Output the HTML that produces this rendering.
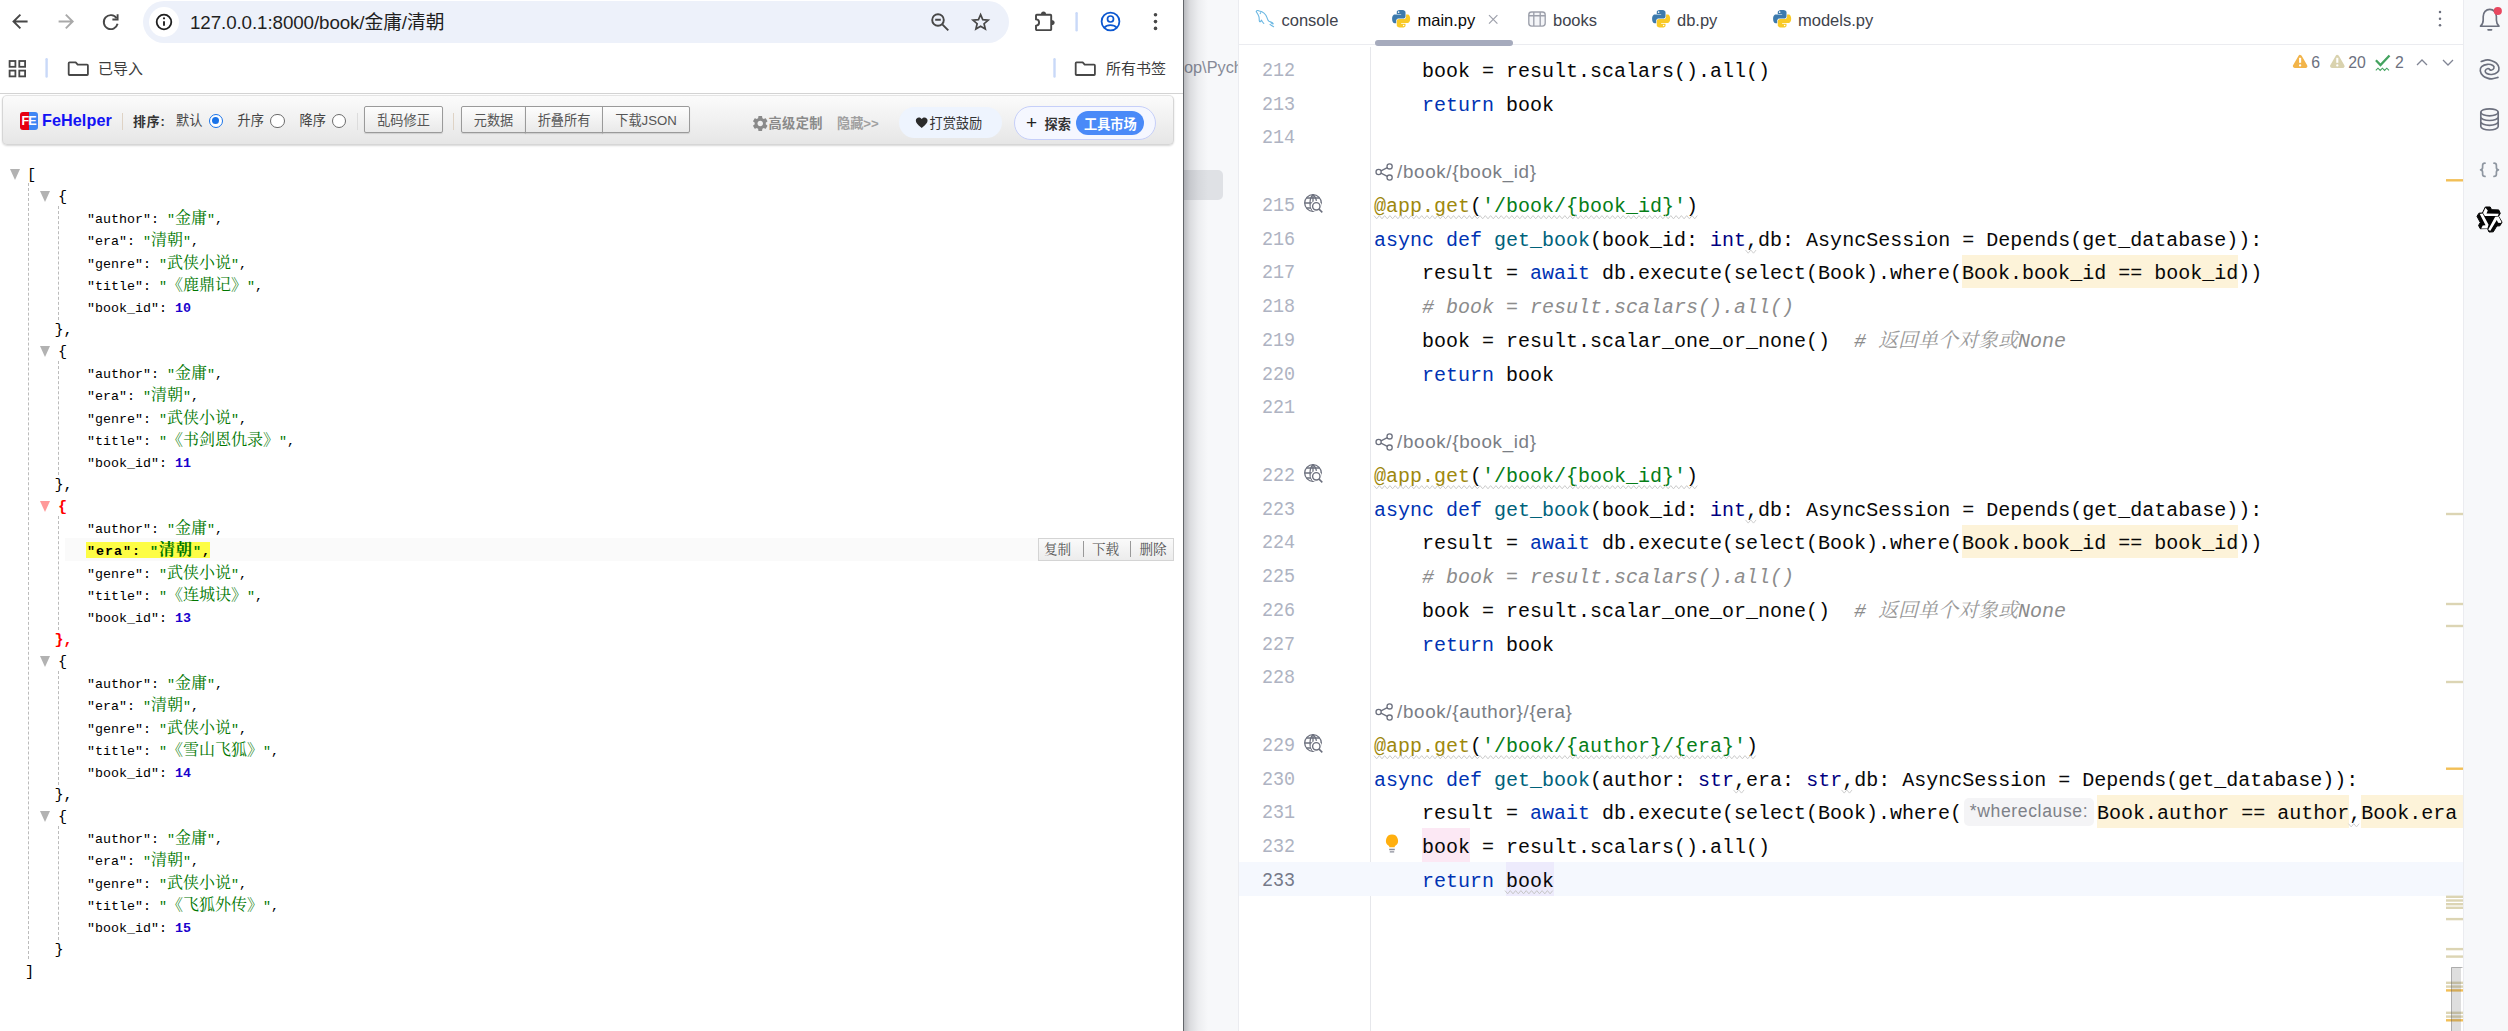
<!DOCTYPE html>
<html lang="zh-CN"><head><meta charset="utf-8"><title>FeHelper JSON / PyCharm</title>
<style>
*{box-sizing:border-box}
html,body{margin:0;padding:0}
body{width:2508px;height:1031px;overflow:hidden;background:#fff;position:relative;font-family:"Liberation Sans","Noto Sans CJK SC",sans-serif;color:#1f1f1f}
.abs{position:absolute}
#br{position:absolute;left:0;top:0;width:1183px;height:1031px;background:#fff;overflow:hidden}
#ide{position:absolute;left:1183px;top:0;width:1325px;height:1031px;background:#fff;overflow:hidden}
.ui{font-family:"Liberation Sans","Noto Sans CJK SC",sans-serif}
/* ---- browser chrome ---- */
#omni{position:absolute;left:143px;top:1px;width:866px;height:42px;border-radius:21px;background:#edf1fa}
#info{position:absolute;left:149px;top:7px;width:30px;height:30px;border-radius:15px;background:#fff}
#url{position:absolute;left:190px;top:9.5px;font-size:18.8px;line-height:26px;color:#1f1f1f;white-space:nowrap;letter-spacing:-0.1px}
.bm{position:absolute;margin-top:.8px;font-size:15px;line-height:20px;color:#3c3c3c;white-space:nowrap}
/* ---- fehelper ---- */
#fhbar{position:absolute;left:1.8px;top:94.5px;width:1172.2px;height:50px;border:1px solid #d6d6d6;border-top-color:#e4e4e4;border-radius:5px;background:linear-gradient(#fbfbfb,#e6e6e6);box-shadow:0 1px 2px rgba(0,0,0,.16)}
.ft{position:absolute;margin-top:1.3px;font-size:13.2px;line-height:20px;white-space:nowrap;color:#444}
.fbtn{position:absolute;top:106px;height:27px;border:1px solid #9a9a9a;background:linear-gradient(#fdfdfd,#e9e9e9);font-size:13.2px;line-height:28.8px;text-align:center;color:#555;box-shadow:0 1px 1px rgba(0,0,0,.12)}
.radio{position:absolute;width:14.6px;height:14.6px;border-radius:7.3px;border:1.3px solid #6b6b6b;background:#fff}
/* ---- json ---- */
.jr{position:absolute;left:0;height:22px;line-height:22px;white-space:pre;font-family:"Liberation Mono","Noto Serif CJK SC",monospace;font-size:13.33px;color:#000}
.jr .c{font-family:"Liberation Mono","Noto Serif CJK SC",serif;font-size:16px;line-height:0}
.s{color:#007700}.n{color:#1a01cc;font-weight:bold}
.tri{position:absolute;width:0;height:0;border-left:5.5px solid transparent;border-right:5.5px solid transparent;border-top:11px solid #b2b2b2}
.vl{position:absolute;width:0;border-left:1px dashed #bbb}
/* ---- ide ---- */
.cl{position:absolute;left:191px;height:34px;line-height:34px;white-space:pre;font-family:"Liberation Mono","Noto Sans CJK SC",monospace;font-size:20px;color:#080808}
.ln{position:absolute;left:55px;width:57px;text-align:right;height:34px;line-height:34px;font-family:"Liberation Mono",monospace;font-size:18.4px;color:#aeb3c2;transform:scaleY(1.1);transform-origin:50% 58%}
.k{color:#0033b3}.f{color:#00627a}.d{color:#9e880d}.g{color:#067d17}.cm{color:#8c8c8c;font-style:italic}.b{color:#000080}
.hw{background:#fdf3d9}.cn{font-family:"Liberation Mono","Noto Serif CJK SC",serif;color:#999;line-height:0}
.hint{position:absolute;left:214px;height:34px;line-height:34px;font-size:18.8px;letter-spacing:.68px;color:#7a7e85;white-space:nowrap}
.tab{position:absolute;top:9px;font-size:16.5px;line-height:22px;color:#4a4d57;white-space:nowrap}
.mk{position:absolute;left:1263px;width:17px;height:2px}
</style></head><body>

<div id="br">
<!-- nav icons -->
<svg class="abs" style="left:0;top:0" width="1183" height="93" viewBox="0 0 1183 93" fill="none" stroke-linecap="round" stroke-linejoin="round">
 <g stroke="#474747" stroke-width="1.9">
  <path d="M27.6 21.5H14.2M20.4 14.6l-6.9 6.9 6.9 6.9" stroke-linecap="butt" stroke-linejoin="miter"/>
  <path d="M116.6 18.2a7 7 0 1 0 1 5.6" stroke-linecap="butt"/>
  <path d="M117.6 14.3v5.2h-5.2" stroke-linecap="butt" stroke-linejoin="miter"/>
 </g>
 <path d="M58.6 21.5H72M65.8 14.6l6.9 6.9-6.9 6.9" stroke="#a9a9a9" stroke-width="1.9" stroke-linecap="butt" stroke-linejoin="miter"/>
</svg>
<div id="omni"></div>
<div id="info"></div>
<svg class="abs" style="left:143px;top:0" width="870" height="44" viewBox="143 0 870 44" fill="none">
 <circle cx="164" cy="22" r="7.3" stroke="#1f1f1f" stroke-width="1.8"/>
 <path d="M164 21.2v4.6" stroke="#1f1f1f" stroke-width="1.9"/><circle cx="164" cy="18.3" r="1.1" fill="#1f1f1f"/>
 <g stroke="#474747" stroke-width="1.9">
  <circle cx="938" cy="20" r="5.8"/><path d="M942.3 24.4l6 6M935.2 19.8h5.6"/>
  <path d="M980.6 14.6l2.15 5.05 5.45.47-4.14 3.58 1.25 5.33-4.71-2.84-4.71 2.84 1.25-5.33-4.14-3.58 5.45-.47z" stroke-width="1.7" stroke-linejoin="miter"/>
 </g>
</svg>
<div id="url">127.0.0.1:8000/book/金庸/清朝</div>
<svg class="abs" style="left:1020px;top:0" width="163" height="44" viewBox="1020 0 163 44" fill="none">
 <path d="M1036 19.400V15.600a.8.800 0 0 1 .8-.8h13.600a.8.800 0 0 1 .8.800v13.700a.8.800 0 0 1-.8.800h-13.600a.8.800 0 0 1-.8-.8v-3.700A3.100 3.100 0 0 0 1036 19.400z" stroke="#474747" stroke-width="1.900" stroke-linejoin="round"/>
 <path d="M1040.900 14.800a2.600 3.400 0 0 1 5.200 0z" fill="#474747"/><path d="M1051.200 19.900a3.400 2.600 0 0 1 0 5.200z" fill="#474747"/>
 <rect x="1075.400" y="12" width="2.4" height="19.5" rx="1.2" fill="#c9d9f8"/>
 <circle cx="1110.500" cy="21.500" r="8.900" stroke="#0b57d0" stroke-width="1.8"/>
 <circle cx="1110.500" cy="19" r="3" stroke="#0b57d0" stroke-width="1.7"/>
 <path d="M1104.300 27.600c3-3.400 9.400-3.400 12.400 0" stroke="#0b57d0" stroke-width="1.7"/>
 <circle cx="1155.500" cy="14.800" r="1.800" fill="#474747"/><circle cx="1155.500" cy="21.600" r="1.800" fill="#474747"/><circle cx="1155.500" cy="28.400" r="1.800" fill="#474747"/>
</svg>
<!-- bookmarks bar -->
<svg class="abs" style="left:0;top:50px" width="1183" height="40" viewBox="0 50 1183 40" fill="none">
 <g stroke="#474747" stroke-width="1.8">
  <rect x="9.600" y="61" width="5.800" height="5.800"/><rect x="19.300" y="61" width="5.800" height="5.800"/>
  <rect x="9.600" y="70.600" width="5.800" height="5.800"/><rect x="19.300" y="70.600" width="5.800" height="5.800"/>
  <path d="M69.500 62.400h6.200l2 2.300h9.400a.8.800 0 0 1 .8.800v8.700a.8.800 0 0 1-.8.800H69.500a.8.800 0 0 1-.8-.8V63.200a.8.800 0 0 1 .8-.8z" stroke-linejoin="round"/>
  <path d="M1076.500 62.400h6.200l2 2.300h9.400a.8.800 0 0 1 .8.800v8.700a.8.800 0 0 1-.8.800h-17.600a.8.800 0 0 1-.8-.8V63.200a.8.800 0 0 1 .8-.8z" stroke-linejoin="round"/>
 </g>
 <rect x="45.400" y="58" width="2.400" height="19.800" rx="1.200" fill="#c9d9f8"/>
 <rect x="1053.300" y="58" width="2.400" height="19.800" rx="1.200" fill="#c9d9f8"/>
</svg>
<div class="bm" style="left:98px;top:58px">已导入</div>
<div class="bm" style="left:1106px;top:58px">所有书签</div>
<div class="abs" style="left:0;top:93px;width:1183px;height:1px;background:#d3d3d3"></div>

<div id="fhbar"></div>
<div class="abs" style="left:20px;top:112px;width:18px;height:18px;border-radius:3px;overflow:hidden;background:linear-gradient(90deg,#e60012 0,#e60012 50%,#3f86f4 50%,#3f86f4 100%)"><div class="abs" style="left:1.5px;top:2px;font:bold 12.5px/14px 'Liberation Sans',sans-serif;color:#fff;letter-spacing:-0.8px">FE</div></div>
<div class="ft" style="left:42px;top:108px;font-size:16.2px;line-height:22px;font-weight:bold;color:#1212f5;letter-spacing:.07px">FeHelper</div>
<div class="abs" style="left:121.500px;top:113px;width:1px;height:17px;background:#dfd3c5"></div>
<div class="ft" style="left:133px;top:110.600px;font-size:12.800px;font-weight:bold;color:#333;letter-spacing:.9px">排序:</div>
<div class="ft" style="left:176px;top:110px">默认</div>
<div class="radio" style="left:208.500px;top:113.500px;border-color:#1a73e8"><div class="abs" style="left:2.2px;top:2.2px;width:7px;height:7px;border-radius:4px;background:#1a73e8"></div></div>
<div class="ft" style="left:237.500px;top:110px">升序</div>
<div class="radio" style="left:270px;top:113.500px"></div>
<div class="ft" style="left:299.500px;top:110px">降序</div>
<div class="radio" style="left:331.500px;top:113.500px"></div>
<div class="abs" style="left:356.500px;top:113px;width:1px;height:17px;background:#dcdcdc"></div>
<div class="fbtn" style="left:364px;width:79px;border-radius:2px">乱码修正</div>
<div class="abs" style="left:453px;top:113px;width:1px;height:17px;background:#dfd3c5"></div>
<div class="fbtn" style="left:461px;width:65px;border-radius:2px 0 0 2px">元数据</div>
<div class="fbtn" style="left:525px;width:78px;border-radius:0">折叠所有</div>
<div class="fbtn" style="left:602px;width:88px;border-radius:0 2px 2px 0">下载JSON</div>
<svg class="abs" style="left:750.800px;top:113.500px" width="18.500" height="19" viewBox="0 0 24 24" preserveAspectRatio="none"><path fill="#8a8a8a" d="M19.140 12.940c.040-.3.060-.610.060-.940 0-.320-.020-.640-.070-.940l2.030-1.580a.490.490 0 0 0 .120-.610l-1.920-3.320a.488.488 0 0 0-.590-.220l-2.390.960c-.5-.380-1.030-.7-1.620-.940l-.360-2.540a.484.484 0 0 0-.480-.410h-3.840c-.240 0-.430.170-.470.410l-.360 2.540c-.590.240-1.130.570-1.620.940l-2.390-.960c-.220-.080-.470 0-.590.220L2.740 8.870c-.120.210-.080.470.120.610l2.030 1.580c-.050.3-.090.630-.090.940s.020.640.070.940l-2.030 1.580a.490.490 0 0 0-.120.610l1.920 3.320c.120.220.370.290.590.220l2.390-.960c.5.380 1.030.7 1.620.940l.360 2.540c.050.240.240.410.480.410h3.840c.240 0 .440-.170.470-.410l.360-2.540c.590-.240 1.130-.560 1.620-.940l2.390.960c.220.080.470 0 .590-.220l1.920-3.320c.120-.220.070-.470-.120-.610l-2.010-1.580zM12 15.600c-1.980 0-3.600-1.620-3.600-3.600s1.620-3.600 3.600-3.600 3.600 1.620 3.600 3.600-1.620 3.600-3.600 3.600z"/></svg>
<div class="ft" style="left:768.500px;top:113px;font-weight:bold;color:#8a8a8a;letter-spacing:.4px">高级定制</div>
<div class="ft" style="left:837px;top:113px;font-weight:bold;color:#a0a0a0">隐藏&gt;&gt;</div>
<div class="abs" style="left:899px;top:107px;width:103px;height:30.500px;border-radius:16px;background:#eef4fe"></div>
<svg class="abs" style="left:914.600px;top:116px" width="13.400" height="12.500" viewBox="0 0 24 22"><path fill="#2b2b2b" d="M12 21.400l-1.500-1.400C4.900 15 1.500 11.900 1.500 8.100 1.500 5 3.900 2.600 7 2.600c1.700 0 3.400.8 4.500 2.100l.5.600.5-.6c1.100-1.300 2.800-2.100 4.500-2.100 3.100 0 5.500 2.400 5.500 5.500 0 3.800-3.400 6.900-9 12z"/></svg>
<div class="ft" style="left:929.500px;top:112.500px;color:#333">打赏鼓励</div>
<div class="abs" style="left:1014px;top:106px;width:142px;height:34px;border-radius:17px;background:#f5f7ff;border:1px solid #c6cff9"></div>
<div class="ft" style="left:1026px;top:111px;font-size:19px;line-height:22px;color:#222">+</div>
<div class="ft" style="left:1044.500px;top:113.500px;font-weight:bold;color:#333">探索</div>
<div class="abs" style="left:1076px;top:111px;width:68px;height:24px;border-radius:12px;background:#4a8af8"></div>
<div class="ft" style="left:1084px;top:113.500px;font-weight:bold;color:#fff">工具市场</div>
<div class="abs" style="left:65px;top:538px;width:1109px;height:22.5px;background:#fafafa"></div>
<div class="abs" style="left:86px;top:542px;width:124px;height:16px;background:#fdfd45"></div>
<div class="vl" style="left:28px;top:183px;height:776px"></div>
<div class="jr" style="top:163.70px;padding-left:27px;font-size:15.200px;">[</div>
<div class="tri" style="left:9.900px;top:169px"></div>
<div class="tri" style="left:40.400px;top:190.74px;"></div>
<div class="vl" style="left:58px;top:206.14px;height:113.71px"></div>
<div class="jr" style="top:185.84px;padding-left:58px;font-size:15.200px;">{</div>
<div class="jr" style="top:209.29px;padding-left:87px;">"author": <span class="s">"<span class="c">金庸</span>"</span>,</div>
<div class="jr" style="top:231.43px;padding-left:87px;">"era": <span class="s">"<span class="c">清朝</span>"</span>,</div>
<div class="jr" style="top:253.57px;padding-left:87px;">"genre": <span class="s">"<span class="c">武侠小说</span>"</span>,</div>
<div class="jr" style="top:275.71px;padding-left:87px;">"title": <span class="s">"<span class="c">《鹿鼎记》</span>"</span>,</div>
<div class="jr" style="top:297.86px;padding-left:87px;">"book_id": <span class="n">10</span></div>
<div class="jr" style="top:318.70px;padding-left:54.5px;font-size:15.200px;">},</div>
<div class="tri" style="left:40.400px;top:345.74px;"></div>
<div class="vl" style="left:58px;top:361.14px;height:113.71px"></div>
<div class="jr" style="top:340.84px;padding-left:58px;font-size:15.200px;">{</div>
<div class="jr" style="top:364.29px;padding-left:87px;">"author": <span class="s">"<span class="c">金庸</span>"</span>,</div>
<div class="jr" style="top:386.43px;padding-left:87px;">"era": <span class="s">"<span class="c">清朝</span>"</span>,</div>
<div class="jr" style="top:408.57px;padding-left:87px;">"genre": <span class="s">"<span class="c">武侠小说</span>"</span>,</div>
<div class="jr" style="top:430.71px;padding-left:87px;">"title": <span class="s">"<span class="c">《书剑恩仇录》</span>"</span>,</div>
<div class="jr" style="top:452.86px;padding-left:87px;">"book_id": <span class="n">11</span></div>
<div class="jr" style="top:473.70px;padding-left:54.5px;font-size:15.200px;">},</div>
<div class="tri" style="left:40.400px;top:500.74px;border-top-color:#f99"></div>
<div class="vl" style="left:58px;top:516.14px;height:113.71px"></div>
<div class="jr" style="top:495.84px;padding-left:58px;color:#f00;font-weight:bold;font-size:15.200px;">{</div>
<div class="jr" style="top:519.29px;padding-left:87px;">"author": <span class="s">"<span class="c">金庸</span>"</span>,</div>
<div class="jr" style="top:541.43px;padding-left:87px;font-weight:bold;letter-spacing:1px;">"era": <span class="s">"<span class="c">清朝</span>"</span>,</div>
<div class="jr" style="top:563.57px;padding-left:87px;">"genre": <span class="s">"<span class="c">武侠小说</span>"</span>,</div>
<div class="jr" style="top:585.71px;padding-left:87px;">"title": <span class="s">"<span class="c">《连城诀》</span>"</span>,</div>
<div class="jr" style="top:607.86px;padding-left:87px;">"book_id": <span class="n">13</span></div>
<div class="jr" style="top:628.70px;padding-left:54.5px;color:#f00;font-weight:bold;font-size:15.200px;">},</div>
<div class="tri" style="left:40.400px;top:655.74px;"></div>
<div class="vl" style="left:58px;top:671.14px;height:113.71px"></div>
<div class="jr" style="top:650.84px;padding-left:58px;font-size:15.200px;">{</div>
<div class="jr" style="top:674.29px;padding-left:87px;">"author": <span class="s">"<span class="c">金庸</span>"</span>,</div>
<div class="jr" style="top:696.43px;padding-left:87px;">"era": <span class="s">"<span class="c">清朝</span>"</span>,</div>
<div class="jr" style="top:718.57px;padding-left:87px;">"genre": <span class="s">"<span class="c">武侠小说</span>"</span>,</div>
<div class="jr" style="top:740.71px;padding-left:87px;">"title": <span class="s">"<span class="c">《雪山飞狐》</span>"</span>,</div>
<div class="jr" style="top:762.86px;padding-left:87px;">"book_id": <span class="n">14</span></div>
<div class="jr" style="top:783.70px;padding-left:54.5px;font-size:15.200px;">},</div>
<div class="tri" style="left:40.400px;top:810.74px;"></div>
<div class="vl" style="left:58px;top:826.14px;height:113.71px"></div>
<div class="jr" style="top:805.84px;padding-left:58px;font-size:15.200px;">{</div>
<div class="jr" style="top:829.29px;padding-left:87px;">"author": <span class="s">"<span class="c">金庸</span>"</span>,</div>
<div class="jr" style="top:851.43px;padding-left:87px;">"era": <span class="s">"<span class="c">清朝</span>"</span>,</div>
<div class="jr" style="top:873.57px;padding-left:87px;">"genre": <span class="s">"<span class="c">武侠小说</span>"</span>,</div>
<div class="jr" style="top:895.71px;padding-left:87px;">"title": <span class="s">"<span class="c">《飞狐外传》</span>"</span>,</div>
<div class="jr" style="top:917.86px;padding-left:87px;">"book_id": <span class="n">15</span></div>
<div class="jr" style="top:938.70px;padding-left:54.5px;font-size:15.200px;">}</div>
<div class="jr" style="top:960.84px;padding-left:25px;font-size:15.200px;">]</div>
<div class="abs" style="left:1038px;top:538px;width:136px;height:22.500px;border:1px solid #d4d4d4;background:linear-gradient(#fafafa,#ececec)"></div>
<div class="abs" style="left:1044px;top:540px;font:13.600px/19px 'Liberation Serif','Noto Serif CJK SC',serif;color:#555;white-space:nowrap">复制</div>
<div class="abs" style="left:1092px;top:540px;font:13.600px/19px 'Liberation Serif','Noto Serif CJK SC',serif;color:#555;white-space:nowrap">下载</div>
<div class="abs" style="left:1139.5px;top:540px;font:13.600px/19px 'Liberation Serif','Noto Serif CJK SC',serif;color:#555;white-space:nowrap">删除</div>
<div class="abs" style="left:1083px;top:541px;width:1px;height:16px;background:#999"></div>
<div class="abs" style="left:1130px;top:541px;width:1px;height:16px;background:#999"></div>
</div><!-- /br -->
<div id="ide">
<div class="abs" style="left:1px;top:0;width:55px;height:1031px;background:#f7f8fa;border-right:1px solid #ebecf0"></div>
<div class="abs" style="left:1px;top:170px;width:39px;height:30px;border-radius:0 5px 5px 0;background:#dfe1e5"></div>
<div class="abs ui" style="left:1px;top:55px;width:54px;height:24px;overflow:hidden;font-size:16.300px;line-height:24px;color:#868a97;white-space:nowrap">op\Pychar</div>
<div class="abs" style="left:1px;top:0;width:24px;height:1031px;background:linear-gradient(90deg,rgba(70,72,80,.34),rgba(70,72,80,.16) 25%,rgba(70,72,80,.06) 60%,rgba(70,72,80,0))"></div>
<div class="abs" style="left:0;top:0;width:1px;height:1031px;background:#63666b"></div>
<div class="abs" style="left:56px;top:44px;width:1224px;height:1px;background:#ebecf0"></div>
<div class="abs" style="left:192px;top:40px;width:138px;height:6px;border-radius:3px;background:#a6abbd"></div>

<div class="tab" style="left:98.5px;color:#40434c">console</div>
<div class="tab" style="left:234.5px;color:#0a0a0a">main.py</div>
<div class="tab" style="left:370px;color:#40434c">books</div>
<div class="tab" style="left:494px;color:#40434c">db.py</div>
<div class="tab" style="left:615px;color:#40434c">models.py</div>
<div class="abs" style="left:187px;top:47px;width:1px;height:984px;background:#e6e7eb"></div>
<div class="abs" style="left:56px;top:862.00px;width:1224px;height:33.75px;background:#f5f8fe"></div>
<div class="abs" style="left:779.0px;top:254.50px;width:276.0px;height:33.75px;background:#fdf3d9"></div>
<div class="abs" style="left:779.0px;top:524.50px;width:276.0px;height:33.75px;background:#fdf3d9"></div>
<div class="abs" style="left:914.0px;top:794.50px;width:252.0px;height:33.75px;background:#fdf3d9"></div>
<div class="abs" style="left:1178.0px;top:794.50px;width:102.0px;height:33.75px;background:#fdf3d9"></div>
<div class="abs" style="left:239.0px;top:828.25px;width:48.0px;height:33.75px;background:#fce8f4"></div>
<div class="abs" style="left:323.0px;top:862.00px;width:48.0px;height:33.75px;background:#edebfc"></div>
<div class="abs ui" style="left:781.0px;top:798.00px;width:130px;height:27.500px;border-radius:5px;background:#f4f4f6;font-size:17.600px;letter-spacing:.62px;line-height:27px;color:#7e8188;text-align:center;white-space:nowrap">*whereclause:</div>
<div class="ln" style="top:54.80px">212</div>
<div class="cl" style="top:54.80px">    book = result.scalars().all()</div>
<div class="ln" style="top:88.55px">213</div>
<div class="cl" style="top:88.55px">    <span class="k">return</span> book</div>
<div class="ln" style="top:122.30px">214</div>
<div class="hint ui" style="top:154.75px">/book/{book_id}</div>
<div class="ln" style="top:189.80px">215</div>
<div class="cl" style="top:189.80px"><span class="d">@app.get</span>(<span class="g">'/book/{book_id}'</span>)</div>
<div class="ln" style="top:223.55px">216</div>
<div class="cl" style="top:223.55px"><span class="k">async def</span> <span class="f">get_book</span>(book_id: <span class="b">int</span>,db: AsyncSession = Depends(get_database)):</div>
<div class="ln" style="top:257.30px">217</div>
<div class="cl" style="top:257.30px">    result = <span class="k">await</span> db.execute(select(Book).where(Book.book_id == book_id))</div>
<div class="ln" style="top:291.05px">218</div>
<div class="cl" style="top:291.05px">    <span class="cm"># book = result.scalars().all()</span></div>
<div class="ln" style="top:324.80px">219</div>
<div class="cl" style="top:324.80px">    book = result.scalar_one_or_none()  <span class="cm"># <span class="cn">返回单个对象或</span>None</span></div>
<div class="ln" style="top:358.55px">220</div>
<div class="cl" style="top:358.55px">    <span class="k">return</span> book</div>
<div class="ln" style="top:392.30px">221</div>
<div class="hint ui" style="top:424.75px">/book/{book_id}</div>
<div class="ln" style="top:459.80px">222</div>
<div class="cl" style="top:459.80px"><span class="d">@app.get</span>(<span class="g">'/book/{book_id}'</span>)</div>
<div class="ln" style="top:493.55px">223</div>
<div class="cl" style="top:493.55px"><span class="k">async def</span> <span class="f">get_book</span>(book_id: <span class="b">int</span>,db: AsyncSession = Depends(get_database)):</div>
<div class="ln" style="top:527.30px">224</div>
<div class="cl" style="top:527.30px">    result = <span class="k">await</span> db.execute(select(Book).where(Book.book_id == book_id))</div>
<div class="ln" style="top:561.05px">225</div>
<div class="cl" style="top:561.05px">    <span class="cm"># book = result.scalars().all()</span></div>
<div class="ln" style="top:594.80px">226</div>
<div class="cl" style="top:594.80px">    book = result.scalar_one_or_none()  <span class="cm"># <span class="cn">返回单个对象或</span>None</span></div>
<div class="ln" style="top:628.55px">227</div>
<div class="cl" style="top:628.55px">    <span class="k">return</span> book</div>
<div class="ln" style="top:662.30px">228</div>
<div class="hint ui" style="top:694.75px">/book/{author}/{era}</div>
<div class="ln" style="top:729.80px">229</div>
<div class="cl" style="top:729.80px"><span class="d">@app.get</span>(<span class="g">'/book/{author}/{era}'</span>)</div>
<div class="ln" style="top:763.55px">230</div>
<div class="cl" style="top:763.55px"><span class="k">async def</span> <span class="f">get_book</span>(author: <span class="b">str</span>,era: <span class="b">str</span>,db: AsyncSession = Depends(get_database)):</div>
<div class="ln" style="top:797.30px">231</div>
<div class="cl" style="top:797.30px">    result = <span class="k">await</span> db.execute(select(Book).where(<span style="display:inline-block;width:135px"></span>Book.author == author,Book.era == era))</div>
<div class="ln" style="top:831.05px">232</div>
<div class="cl" style="top:831.05px">    book = result.scalars().all()</div>
<div class="ln" style="color:#767a8a;top:864.80px">233</div>
<div class="cl" style="top:864.80px">    <span class="k">return</span> book</div>
<div class="abs" style="left:1280px;top:0;width:45px;height:1031px;background:#f7f8fa;border-left:1px solid #ebecf0"></div>
<svg class="abs" style="left:0;top:0" width="1325" height="1031" viewBox="0 0 1325 1031" fill="none">
<polyline points="191.0,215.6 193.7,218.8 196.3,215.6 199.0,218.8 201.6,215.6 204.3,218.8 206.9,215.6 209.6,218.8 212.2,215.6 214.9,218.8 217.5,215.6 220.2,218.8 222.8,215.6 225.5,218.8 228.1,215.6 230.8,218.8 233.4,215.6 236.1,218.8 238.7,215.6 241.4,218.8 244.0,215.6 246.7,218.8 249.3,215.6 252.0,218.8 254.6,215.6 257.3,218.8 259.9,215.6 262.6,218.8 265.2,215.6 267.9,218.8 270.5,215.6 273.2,218.8 275.8,215.6 278.5,218.8 281.1,215.6 283.8,218.8 286.4,215.6 289.1,218.8 291.7,215.6 294.4,218.8 297.0,215.6 299.7,218.8 302.3,215.6 305.0,218.8 307.6,215.6 310.3,218.8 312.9,215.6 315.6,218.8 318.2,215.6 320.9,218.8 323.5,215.6 326.2,218.8 328.8,215.6 331.5,218.8 334.1,215.6 336.8,218.8 339.4,215.6 342.1,218.8 344.7,215.6 347.4,218.8 350.0,215.6 352.7,218.8 355.3,215.6 358.0,218.8 360.6,215.6 363.3,218.8 365.9,215.6 368.6,218.8 371.2,215.6 373.9,218.8 376.5,215.6 379.2,218.8 381.8,215.6 384.5,218.8 387.1,215.6 389.8,218.8 392.4,215.6 395.1,218.8 397.7,215.6 400.4,218.8 403.0,215.6 405.7,218.8 408.3,215.6 411.0,218.8 413.6,215.6 416.3,218.8 418.9,215.6 421.6,218.8 424.2,215.6 426.9,218.8 429.5,215.6 432.2,218.8 434.8,215.6 437.5,218.8 440.1,215.6 442.8,218.8 445.4,215.6 448.1,218.8 450.7,215.6 453.4,218.8 456.0,215.6 458.7,218.8 461.3,215.6 464.0,218.8 466.6,215.6 469.3,218.8 471.9,215.6 474.6,218.8 477.2,215.6 479.9,218.8 482.5,215.6 485.2,218.8 487.8,215.6 490.5,218.8 493.1,215.6 495.8,218.8 498.4,215.6 501.1,218.8 503.7,215.6 506.4,218.8 509.0,215.6 511.7,218.8 514.3,215.6" fill="none" stroke="#cbcbcb" stroke-width="1.0"/>
<polyline points="191.0,485.6 193.7,488.8 196.3,485.6 199.0,488.8 201.6,485.6 204.3,488.8 206.9,485.6 209.6,488.8 212.2,485.6 214.9,488.8 217.5,485.6 220.2,488.8 222.8,485.6 225.5,488.8 228.1,485.6 230.8,488.8 233.4,485.6 236.1,488.8 238.7,485.6 241.4,488.8 244.0,485.6 246.7,488.8 249.3,485.6 252.0,488.8 254.6,485.6 257.3,488.8 259.9,485.6 262.6,488.8 265.2,485.6 267.9,488.8 270.5,485.6 273.2,488.8 275.8,485.6 278.5,488.8 281.1,485.6 283.8,488.8 286.4,485.6 289.1,488.8 291.7,485.6 294.4,488.8 297.0,485.6 299.7,488.8 302.3,485.6 305.0,488.8 307.6,485.6 310.3,488.8 312.9,485.6 315.6,488.8 318.2,485.6 320.9,488.8 323.5,485.6 326.2,488.8 328.8,485.6 331.5,488.8 334.1,485.6 336.8,488.8 339.4,485.6 342.1,488.8 344.7,485.6 347.4,488.8 350.0,485.6 352.7,488.8 355.3,485.6 358.0,488.8 360.6,485.6 363.3,488.8 365.9,485.6 368.6,488.8 371.2,485.6 373.9,488.8 376.5,485.6 379.2,488.8 381.8,485.6 384.5,488.8 387.1,485.6 389.8,488.8 392.4,485.6 395.1,488.8 397.7,485.6 400.4,488.8 403.0,485.6 405.7,488.8 408.3,485.6 411.0,488.8 413.6,485.6 416.3,488.8 418.9,485.6 421.6,488.8 424.2,485.6 426.9,488.8 429.5,485.6 432.2,488.8 434.8,485.6 437.5,488.8 440.1,485.6 442.8,488.8 445.4,485.6 448.1,488.8 450.7,485.6 453.4,488.8 456.0,485.6 458.7,488.8 461.3,485.6 464.0,488.8 466.6,485.6 469.3,488.8 471.9,485.6 474.6,488.8 477.2,485.6 479.9,488.8 482.5,485.6 485.2,488.8 487.8,485.6 490.5,488.8 493.1,485.6 495.8,488.8 498.4,485.6 501.1,488.8 503.7,485.6 506.4,488.8 509.0,485.6 511.7,488.8 514.3,485.6" fill="none" stroke="#cbcbcb" stroke-width="1.0"/>
<polyline points="191.0,755.6 193.7,758.8 196.3,755.6 199.0,758.8 201.6,755.6 204.3,758.8 206.9,755.6 209.6,758.8 212.2,755.6 214.9,758.8 217.5,755.6 220.2,758.8 222.8,755.6 225.5,758.8 228.1,755.6 230.8,758.8 233.4,755.6 236.1,758.8 238.7,755.6 241.4,758.8 244.0,755.6 246.7,758.8 249.3,755.6 252.0,758.8 254.6,755.6 257.3,758.8 259.9,755.6 262.6,758.8 265.2,755.6 267.9,758.8 270.5,755.6 273.2,758.8 275.8,755.6 278.5,758.8 281.1,755.6 283.8,758.8 286.4,755.6 289.1,758.8 291.7,755.6 294.4,758.8 297.0,755.6 299.7,758.8 302.3,755.6 305.0,758.8 307.6,755.6 310.3,758.8 312.9,755.6 315.6,758.8 318.2,755.6 320.9,758.8 323.5,755.6 326.2,758.8 328.8,755.6 331.5,758.8 334.1,755.6 336.8,758.8 339.4,755.6 342.1,758.8 344.7,755.6 347.4,758.8 350.0,755.6 352.7,758.8 355.3,755.6 358.0,758.8 360.6,755.6 363.3,758.8 365.9,755.6 368.6,758.8 371.2,755.6 373.9,758.8 376.5,755.6 379.2,758.8 381.8,755.6 384.5,758.8 387.1,755.6 389.8,758.8 392.4,755.6 395.1,758.8 397.7,755.6 400.4,758.8 403.0,755.6 405.7,758.8 408.3,755.6 411.0,758.8 413.6,755.6 416.3,758.8 418.9,755.6 421.6,758.8 424.2,755.6 426.9,758.8 429.5,755.6 432.2,758.8 434.8,755.6 437.5,758.8 440.1,755.6 442.8,758.8 445.4,755.6 448.1,758.8 450.7,755.6 453.4,758.8 456.0,755.6 458.7,758.8 461.3,755.6 464.0,758.8 466.6,755.6 469.3,758.8 471.9,755.6 474.6,758.8 477.2,755.6 479.9,758.8 482.5,755.6 485.2,758.8 487.8,755.6 490.5,758.8 493.1,755.6 495.8,758.8 498.4,755.6 501.1,758.8 503.7,755.6 506.4,758.8 509.0,755.6 511.7,758.8 514.3,755.6 517.0,758.8 519.6,755.6 522.3,758.8 524.9,755.6 527.6,758.8 530.2,755.6 532.9,758.8 535.5,755.6 538.2,758.8 540.8,755.6 543.5,758.8 546.1,755.6 548.8,758.8 551.4,755.6 554.1,758.8 556.7,755.6 559.4,758.8 562.0,755.6 564.7,758.8 567.3,755.6 570.0,758.8 572.6,755.6" fill="none" stroke="#cbcbcb" stroke-width="1.0"/>
<polyline points="562.5,250.0 565.2,253.2 567.8,250.0 570.5,253.2 573.1,250.0" fill="none" stroke="#cfcfcf" stroke-width="1"/>
<polyline points="562.5,519.9 565.2,523.1 567.8,519.9 570.5,523.1 573.1,519.9" fill="none" stroke="#cfcfcf" stroke-width="1"/>
<polyline points="550.5,789.9 553.2,793.1 555.8,789.9 558.5,793.1 561.1,789.9" fill="none" stroke="#cfcfcf" stroke-width="1"/>
<polyline points="658.5,789.9 661.2,793.1 663.8,789.9 666.5,793.1 669.1,789.9" fill="none" stroke="#cfcfcf" stroke-width="1"/>
<polyline points="1165.5,823.7 1168.2,826.9 1170.8,823.7 1173.5,826.9 1176.1,823.7" fill="none" stroke="#cfcfcf" stroke-width="1"/>
<polyline points="322.0,890.6 324.7,893.8 327.3,890.6 330.0,893.8 332.6,890.6 335.3,893.8 337.9,890.6 340.6,893.8 343.2,890.6 345.9,893.8 348.5,890.6 351.2,893.8 353.8,890.6 356.5,893.8 359.1,890.6 361.8,893.8 364.4,890.6 367.1,893.8 369.7,890.6" fill="none" stroke="#c6c6c6" stroke-width="1.0"/>
<g transform="translate(-1183,0)">
<g stroke="#6ab7e2" stroke-width="1.100" stroke-linecap="round" stroke-linejoin="round"><path d="M1256.300 11.600C1256.200 10.300 1258.300 10.300 1259.400 11 C1263.200 11.600 1266 15 1267 17.600 C1267.600 19.200 1267.800 20.600 1269 21.300 C1270.500 22 1272 22.300 1273 23.400"/><path d="M1270 24.500l3.600 2.200M1271 22.700l2 1.300"/><path d="M1256.400 11.800C1257 13.200 1258.200 14.600 1258.700 16 C1259.800 18.600 1258.700 20.600 1259.600 21.600 C1260.400 22.300 1260.800 21 1261.500 20.200 C1262 21.400 1263 22.600 1263.800 23.500"/><path d="M1260.200 13.600l.5-.9"/></g>
<g transform="translate(1392.1,10) scale(0.1635,0.1605)"><path d="M54.9 0C26.8 0 28.6 12.2 28.6 12.2l.03 12.6h26.800v3.800H18S0 26.500 0 54.900c0 28.400 15.700 27.400 15.700 27.400h9.400V69.100s-.5-15.700 15.400-15.700h26.600s14.900.24 14.900-14.400V14.800S84.300 0 54.900 0zM40.100 8.500a4.800 4.800 0 1 1 0 9.600 4.800 4.800 0 0 1 0-9.600z" fill="#3d7aad" fill-rule="evenodd"/><path d="M55.700 109.700c28.100 0 26.300-12.200 26.300-12.200l-.03-12.600H55.200v-3.800h37.400s18 2 18-26.300c0-28.400-15.700-27.400-15.700-27.400h-9.400v13.200s.5 15.700-15.400 15.700H43.500s-14.900-.24-14.900 14.400v24.200s-2.300 14.800 27.100 14.800zm14.800-8.500a4.800 4.800 0 1 1 0-9.600 4.800 4.800 0 0 1 0 9.600z" fill="#f9ca27" fill-rule="evenodd"/></g>
<g transform="translate(1652.1,10) scale(0.1635,0.1605)"><path d="M54.9 0C26.8 0 28.6 12.2 28.6 12.2l.03 12.6h26.800v3.800H18S0 26.500 0 54.900c0 28.400 15.700 27.400 15.700 27.400h9.400V69.100s-.5-15.700 15.400-15.700h26.600s14.900.24 14.900-14.400V14.800S84.300 0 54.900 0zM40.100 8.500a4.800 4.800 0 1 1 0 9.600 4.800 4.800 0 0 1 0-9.600z" fill="#3d7aad" fill-rule="evenodd"/><path d="M55.700 109.700c28.100 0 26.300-12.200 26.300-12.200l-.03-12.600H55.200v-3.800h37.400s18 2 18-26.300c0-28.400-15.700-27.400-15.700-27.400h-9.400v13.200s.5 15.700-15.400 15.700H43.500s-14.900-.24-14.900 14.400v24.200s-2.300 14.800 27.100 14.800zm14.800-8.500a4.800 4.800 0 1 1 0-9.600 4.800 4.800 0 0 1 0 9.600z" fill="#f9ca27" fill-rule="evenodd"/></g>
<g transform="translate(1773.1,10) scale(0.1635,0.1605)"><path d="M54.9 0C26.8 0 28.6 12.2 28.6 12.2l.03 12.6h26.800v3.800H18S0 26.500 0 54.900c0 28.400 15.700 27.400 15.700 27.400h9.400V69.100s-.5-15.700 15.400-15.700h26.600s14.900.24 14.900-14.400V14.800S84.300 0 54.900 0zM40.100 8.500a4.800 4.800 0 1 1 0 9.600 4.800 4.800 0 0 1 0-9.600z" fill="#3d7aad" fill-rule="evenodd"/><path d="M55.700 109.700c28.100 0 26.300-12.200 26.300-12.200l-.03-12.600H55.200v-3.800h37.400s18 2 18-26.300c0-28.400-15.700-27.400-15.700-27.400h-9.400v13.200s.5 15.700-15.400 15.700H43.500s-14.900-.24-14.900 14.400v24.200s-2.300 14.800 27.100 14.800zm14.800-8.500a4.800 4.800 0 1 1 0-9.600 4.800 4.800 0 0 1 0 9.600z" fill="#f9ca27" fill-rule="evenodd"/></g>
<path d="M1489 15.200l8.400 8.400M1497.400 15.200l-8.400 8.400" stroke="#9da0ab" stroke-width="1.200"/>
<rect x="1528.800" y="12" width="16.400" height="14.100" rx="2.800" fill="#f4f5f8" stroke="#9da0ab" stroke-width="1.350"/><path d="M1528.800 15.700h16.400M1533.800 12v14.100M1540.200 12v14.100" stroke="#9da0ab" stroke-width="1.350"/>
<circle cx="2440" cy="12.1" r="1.250" fill="#6c707e"/>
<circle cx="2440" cy="18.7" r="1.250" fill="#6c707e"/>
<circle cx="2440" cy="25.2" r="1.250" fill="#6c707e"/>
<path d="M2300.1 56.700l5.500 9.400h-11z" fill="#f2b44a" stroke="#f2b44a" stroke-width="3.600" stroke-linejoin="round"/><path d="M2300.1 57.800v5" stroke="#fff" stroke-width="2.100"/><circle cx="2300.1" cy="65.400" r="1.150" fill="#fff"/>
<path d="M2337.3 56.700l5.500 9.400h-11z" fill="#d9d2ae" stroke="#d9d2ae" stroke-width="3.600" stroke-linejoin="round"/><path d="M2337.3 57.800v5" stroke="#fff" stroke-width="2.100"/><circle cx="2337.3" cy="65.400" r="1.150" fill="#fff"/>
<path d="M2375.900 60.300l4.600 4.700 9-9.500" stroke="#43a35f" stroke-width="2.300"/>
<path d="M2375.800 70.400l2.200-2.200 2.200 2.200 2.200-2.200 2.200 2.200 2.200-2.200 2.200 2.200" stroke="#43a35f" stroke-width="1.050"/>
<g font-family="Liberation Sans, sans-serif" font-size="15.800" fill="#6c707e"><text x="2311.200" y="67.800">6</text><text x="2348.300" y="67.800">20</text><text x="2395" y="67.800">2</text></g>
<path d="M2417 65l5-5 5 5M2443 60l5 5 5-5" stroke="#818594" stroke-width="1.300"/>
<rect x="2446" y="179.1" width="17" height="2.400" fill="#f2bf57"/>
<rect x="2446" y="512.8" width="17" height="2.400" fill="#dcd5b4"/>
<rect x="2446" y="602.8" width="17" height="2.400" fill="#dcd5b4"/>
<rect x="2446" y="624.8" width="17" height="2.400" fill="#dcd5b4"/>
<rect x="2446" y="680.8" width="17" height="2.400" fill="#dcd5b4"/>
<rect x="2446" y="767.5" width="17" height="2.400" fill="#f2bf57"/>
<rect x="2446" y="895.6" width="17" height="2.400" fill="#dcd5b4"/>
<rect x="2446" y="899.3" width="17" height="2.400" fill="#dcd5b4"/>
<rect x="2446" y="903.0" width="17" height="2.400" fill="#dcd5b4"/>
<rect x="2446" y="906.6" width="17" height="2.400" fill="#dcd5b4"/>
<rect x="2446" y="917.9" width="17" height="2.400" fill="#dcd5b4"/>
<rect x="2446" y="947.9" width="17" height="2.400" fill="#dcd5b4"/>
<rect x="2446" y="955.4" width="17" height="2.400" fill="#dcd5b4"/>
<rect x="2446" y="981.6" width="17" height="2.400" fill="#dcd5b4"/>
<rect x="2446" y="985.4" width="17" height="2.400" fill="#dcd5b4"/>
<rect x="2446" y="989.2" width="17" height="2.400" fill="#f2bf57"/>
<rect x="2446" y="1011.6" width="17" height="2.400" fill="#dcd5b4"/>
<rect x="2446" y="1015.4" width="17" height="2.400" fill="#dcd5b4"/>
<rect x="2446" y="1019.1" width="17" height="2.400" fill="#f2bf57"/>
<rect x="2451.500" y="967.500" width="9.500" height="64" fill="rgba(90,90,90,.2)"/><path d="M2451.500 1031V967.500h11" stroke="rgba(90,90,90,.45)" stroke-width="1"/>
<g stroke="#6c707e" stroke-width="1.300"><circle cx="1313" cy="203" r="8.300"/><path d="M1313 194.7 v16.600M1304.700 203h16.600M1306.500 198h13M1306.500 208h8"/><path d="M1313 194.7c-4 3.500-4 13.100 0 16.600M1313 194.7c2.500 2 3.500 5 3.700 8"/></g>
<circle cx="1316.300" cy="206.3" r="5.600" fill="#fff"/><circle cx="1316.300" cy="206.3" r="3.700" fill="#fff" stroke="#6c707e" stroke-width="1.400"/><path d="M1319 209.1l3.300 3.300" stroke="#6c707e" stroke-width="1.500"/><path d="M1319.500 209l4 4" stroke="#fff" stroke-width="0"/>
<g stroke="#6c707e" stroke-width="1.300"><circle cx="1313" cy="473" r="8.300"/><path d="M1313 464.7 v16.600M1304.700 473h16.600M1306.500 468h13M1306.500 478h8"/><path d="M1313 464.7c-4 3.500-4 13.100 0 16.600M1313 464.7c2.500 2 3.500 5 3.700 8"/></g>
<circle cx="1316.300" cy="476.3" r="5.600" fill="#fff"/><circle cx="1316.300" cy="476.3" r="3.700" fill="#fff" stroke="#6c707e" stroke-width="1.400"/><path d="M1319 479.1l3.300 3.300" stroke="#6c707e" stroke-width="1.500"/><path d="M1319.500 479l4 4" stroke="#fff" stroke-width="0"/>
<g stroke="#6c707e" stroke-width="1.300"><circle cx="1313" cy="743" r="8.300"/><path d="M1313 734.7 v16.600M1304.700 743h16.600M1306.500 738h13M1306.500 748h8"/><path d="M1313 734.7c-4 3.500-4 13.100 0 16.600M1313 734.7c2.500 2 3.500 5 3.700 8"/></g>
<circle cx="1316.300" cy="746.3" r="5.600" fill="#fff"/><circle cx="1316.300" cy="746.3" r="3.700" fill="#fff" stroke="#6c707e" stroke-width="1.400"/><path d="M1319 749.1l3.300 3.300" stroke="#6c707e" stroke-width="1.500"/><path d="M1319.500 749l4 4" stroke="#fff" stroke-width="0"/>
<g stroke="#6c707e" stroke-width="1.300"><circle cx="1389.600" cy="166.4" r="2.600"/><circle cx="1378.600" cy="172" r="2.600"/><circle cx="1389.600" cy="177.6" r="2.600"/><path d="M1381 170.8l6.300-3.200M1381 173.2l6.300 3.200"/></g>
<g stroke="#6c707e" stroke-width="1.300"><circle cx="1389.600" cy="436.4" r="2.600"/><circle cx="1378.600" cy="442" r="2.600"/><circle cx="1389.600" cy="447.6" r="2.600"/><path d="M1381 440.8l6.300-3.200M1381 443.2l6.300 3.200"/></g>
<g stroke="#6c707e" stroke-width="1.300"><circle cx="1389.600" cy="706.4" r="2.600"/><circle cx="1378.600" cy="712" r="2.600"/><circle cx="1389.600" cy="717.6" r="2.600"/><path d="M1381 710.8l6.300-3.200M1381 713.2l6.300 3.200"/></g>
<path d="M1392 834.600a6.100 6.100 0 0 1 3.300 11.200c-.5.4-.7.900-.7 1.500h-5.200c0-.6-.2-1.100-.7-1.500A6.100 6.100 0 0 1 1392 834.600z" fill="#ffaf0f"/><path d="M1389.200 849.500h5.600M1389.800 851.800h4.400" stroke="#8a8d99" stroke-width="1.300"/>
<g stroke="#6c707e" stroke-width="1.650" stroke-linecap="round" stroke-linejoin="round">
<path d="M2480.500 26.200h18.500c-1.800-1.600-2.600-3.600-2.600-6.200v-3.400c0-4.200-2.800-7.200-6.600-7.200s-6.600 3-6.600 7.200V20c0 2.600-.8 4.600-2.700 6.200zM2488 29.800h3.600"/>
<path d="M2489.60 69.40C2489.86 69.54 2490.44 70.44 2491.15 70.25C2491.86 70.06 2493.58 69.03 2493.87 68.24C2494.16 67.45 2493.97 66.17 2492.90 65.52C2491.83 64.87 2489.34 64.16 2487.46 64.35C2485.58 64.54 2482.84 65.58 2481.64 66.68C2480.44 67.78 2480.08 69.46 2480.28 70.95C2480.47 72.44 2481.61 74.41 2482.81 75.61C2484.01 76.81 2485.97 77.58 2487.46 78.13C2488.95 78.68 2489.99 79.04 2491.74 78.91C2493.49 78.78 2496.91 77.62 2497.95 77.36"/><path d="M2489.60 69.40C2489.34 69.26 2488.76 68.36 2488.05 68.55C2487.34 68.74 2485.62 69.77 2485.33 70.56C2485.04 71.35 2485.23 72.63 2486.30 73.28C2487.37 73.93 2489.86 74.64 2491.74 74.45C2493.62 74.26 2496.36 73.22 2497.56 72.12C2498.76 71.02 2499.12 69.34 2498.92 67.85C2498.72 66.36 2497.59 64.39 2496.39 63.19C2495.19 61.99 2493.23 61.22 2491.74 60.67C2490.25 60.12 2489.21 59.76 2487.46 59.89C2485.71 60.02 2482.28 61.18 2481.25 61.44"/>
<ellipse cx="2489.500" cy="112.300" rx="8.700" ry="3.500"/><path d="M2480.800 112.300v14.200c0 1.900 3.900 3.500 8.700 3.500s8.700-1.600 8.700-3.500v-14.200M2480.800 117c0 1.900 3.900 3.500 8.700 3.500s8.700-1.600 8.700-3.500M2480.800 121.800c0 1.900 3.900 3.500 8.700 3.500s8.700-1.600 8.700-3.500"/>
</g>
<g stroke="#8e96a0" stroke-width="1.700" stroke-linecap="round" stroke-linejoin="round"><path d="M2485 163.200c-1.800 0-2.400.8-2.400 2.200v2c0 1.200-.6 2.200-2 2.400 1.400.2 2 1.200 2 2.400v2c0 1.400.6 2.200 2.400 2.200M2494 163.200c1.800 0 2.400.8 2.400 2.200v2c0 1.200.6 2.200 2 2.400-1.400.2-2 1.200-2 2.400v2c0 1.400-.6 2.200-2.400 2.200"/></g>
<circle cx="2497.800" cy="11" r="4.100" fill="#e8475f"/>
<polygon points="2485.33,206.99 2490.19,206.99 2491.55,209.70 2498.73,209.90 2500.28,213.39 2498.53,216.30 2502.03,222.13 2499.89,225.82 2496.79,226.01 2493.29,231.83 2489.02,232.03 2487.47,228.53 2480.29,228.73 2478.54,225.43 2480.29,222.52 2476.99,216.30 2478.93,213.20 2482.42,213.00" fill="#050505" stroke="#050505" stroke-width="1" stroke-linejoin="round"/><polygon points="2485.53,207.76 2487.78,210.56 2486.50,213.51 2498.80,213.66 2497.76,216.11 2484.95,216.11 2483.00,213.12" fill="#fff"/><polygon points="2495.16,216.77 2498.53,216.61 2501.52,221.93 2500.67,222.98 2498.03,222.71 2496.79,219.88 2490.19,231.06 2488.25,229.58" fill="#fff"/><polygon points="2479.78,213.90 2482.62,213.43 2488.56,224.84 2487.39,228.42 2481.18,228.42 2482.73,225.43 2485.53,225.23" fill="#fff"/>
</g>
</svg>
</div>
</body></html>
